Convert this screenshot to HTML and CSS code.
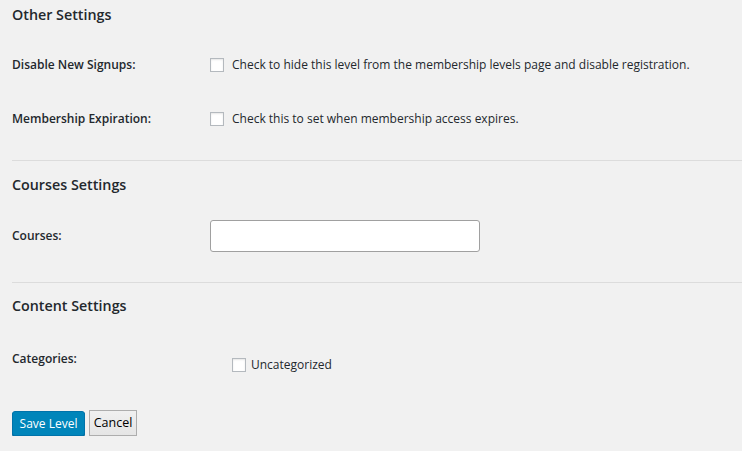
FILE: index.html
```html
<!DOCTYPE html>
<html lang="en">
<head>
  <meta charset="utf-8">
  <title>Edit Membership Level</title>
  <link rel="stylesheet" href="styles.css">
</head>
<body>
  <form class="level-form">
    <div class="section section-first">
      <h3>Other Settings</h3>
      <div class="row">
        <div class="label">Disable New Signups:</div>
        <label class="field"><input type="checkbox" class="check"> Check to hide this level from the membership levels page and disable registration.</label>
      </div>
      <div class="row">
        <div class="label">Membership Expiration:</div>
        <label class="field"><input type="checkbox" class="check"> Check this to set when membership access expires.</label>
      </div>
    </div>

    <div class="section section-courses">
      <h3>Courses Settings</h3>
      <div class="row row-input">
        <div class="label">Courses:</div>
        <div class="field"><input type="text" class="text-input"></div>
      </div>
    </div>

    <div class="section section-content">
      <h3>Content Settings</h3>
      <div class="row row-top">
        <div class="label">Categories:</div>
        <div class="field cat-list">
          <label class="cat"><input type="checkbox" class="check">Uncategorized</label>
        </div>
      </div>
    </div>

    <div class="actions">
      <button type="button" class="btn-primary">Save Level</button>
      <button type="button" class="btn-cancel">Cancel</button>
    </div>
  </form>
</body>
</html>
```

FILE: styles.css
```css
body {
  margin: 0;
  background: #f1f1f1;
  color: #23282d;
  font-family: "Open Sans", "Noto Sans", sans-serif;
  font-size: 12px;
}

.level-form {
  padding-left: 12px;
}

.section {
  border-top: 1px solid #dcdcdc;
  padding-top: 14px;
}

.section-first {
  border-top: none;
  padding-top: 5px;
  padding-bottom: 14px;
}

.section-courses {
  padding-bottom: 18px;
}

.section-content {
  padding-top: 13px;
}

h3 {
  margin: 0 0 13px;
  font-size: 14.3px;
  line-height: 20px;
  font-weight: 600;
}

.row {
  display: flex;
  align-items: center;
  height: 54px;
}

.row-input {
  height: 56px;
}

.row-top {
  align-items: flex-start;
  height: auto;
  padding-top: 20px;
}

.label {
  width: 198px;
  flex: none;
  font-weight: 600;
  line-height: 20px;
}

.field {
  display: flex;
  align-items: center;
  line-height: 20px;
}

.check {
  -webkit-appearance: none;
  appearance: none;
  box-sizing: border-box;
  width: 14px;
  height: 14px;
  margin: 0 8px 0 0;
  border: 1px solid #b4b9be;
  background: #fff;
  box-shadow: inset 0 1px 2px rgba(0, 0, 0, 0.1);
}

.text-input {
  box-sizing: border-box;
  width: 270px;
  height: 32px;
  margin: 0;
  border: 1px solid #a0a0a0;
  border-radius: 3px;
  background: #fff;
}

.cat-list {
  padding: 6px 0 0 22px;
}

.cat .check {
  margin-right: 5px;
}

.cat {
  display: flex;
  align-items: center;
}

.actions {
  display: flex;
  align-items: center;
  gap: 4px;
  padding-top: 34px;
}

.btn-primary {
  box-sizing: border-box;
  height: 25px;
  width: 73px;
  padding: 0;
  margin-top: 2px;
  border: 1px solid #0073aa;
  border-radius: 3px;
  background: #0085ba;
  box-shadow: 0 1px 0 #006799;
  color: #fff;
  font-family: inherit;
  font-size: 12px;
}

.btn-cancel {
  box-sizing: border-box;
  height: 26px;
  width: 48px;
  padding: 0;
  border: 1px solid #adadad;
  border-radius: 0;
  background: linear-gradient(#f0f0f0, #e5e5e5);
  color: #000;
  font-family: inherit;
  font-size: 12.5px;
}
```
